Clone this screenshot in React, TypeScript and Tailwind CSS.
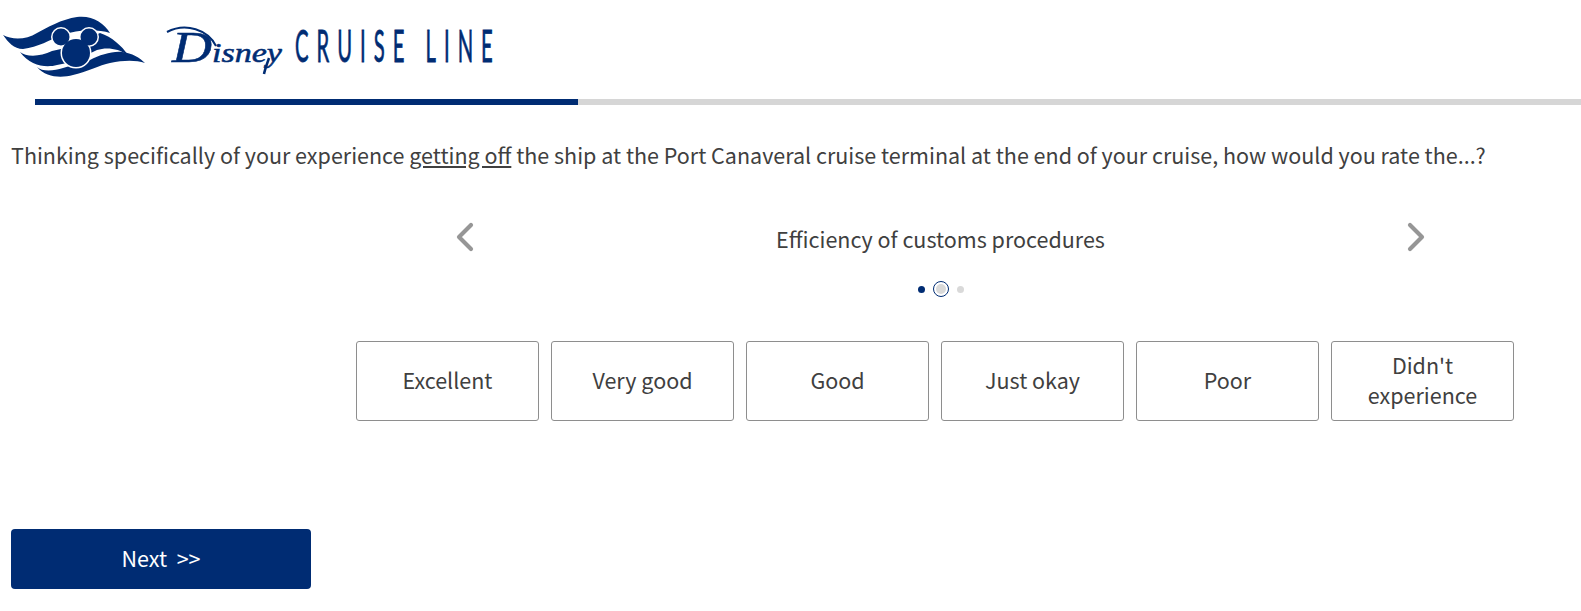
import React from "react";
import { ChevronLeft, ChevronRight } from "lucide-react";

const OPTIONS = ["Excellent", "Very good", "Good", "Just okay", "Poor", "Didn't experience"];

function Logo() {
  return (
    <svg width="510" height="90" viewBox="0 0 510 90" className="block">
      {/* flag */}
      <g fill="#002c73">
        <path d="M3 35 C12 40 26 40 37 33 C46 28 62 19 77 17 C92 15 104 23 110 33 C98 29 78 29 62 35 C50 40 38 47 23 49 C14 49 8 42 3 35 Z" />
        <path d="M20 52 C26 57 40 57 52 51 L70 47 L100 33 C112 37 122 46 128 55 C118 48 106 47 97 50 L72 62 L57 65 C46 68 30 66 20 52 Z" />
        <path d="M37 67 C42 72 54 71 63 68 L90 60 C100 55 112 51 122 52 C132 53 140 58 145 63 C136 60 124 60 110 63 C100 65 86 72 73 75 C62 78 46 78 37 67 Z" />
      </g>
      {/* mouse head, white halo under the fill */}
      <g fill="#002c73" stroke="#fff" strokeWidth="3">
        <circle cx="61" cy="37" r="8.5" />
        <circle cx="89" cy="37" r="8.5" />
        <circle cx="76" cy="53" r="14" />
      </g>
      <g fill="#002c73">
        <circle cx="61" cy="37" r="8.5" />
        <circle cx="89" cy="37" r="8.5" />
        <circle cx="76" cy="53" r="14" />
      </g>
      {/* wordmark */}
      <path d="M167 32 C186 22 208 30 216 46" fill="none" stroke="#002c73" strokeWidth="2" />
      <path d="M269 58 C267 64 265 69 264 74" fill="none" stroke="#002c73" strokeWidth="2.5" />
      <text x="172" y="62" textLength="110" lengthAdjust="spacingAndGlyphs" fill="#002c73" stroke="#002c73" strokeWidth="0.5" fontFamily="'Liberation Serif', serif" fontStyle="italic">
        <tspan fontSize="44">D</tspan>
        <tspan fontSize="27">isney</tspan>
      </text>
      <g transform="translate(295 62) scale(0.46 1)">
        <text x="0" y="0" textLength="430" lengthAdjust="spacing" fill="#002c73" stroke="#002c73" strokeWidth="0.8" fontFamily="Lato, 'Liberation Sans', sans-serif" fontSize="44">
          CRUISE LINE
        </text>
      </g>
    </svg>
  );
}

export default function App() {
  return (
    <div className="w-[1581px] h-[611px] overflow-hidden bg-white text-[#404040] font-['Noto_Sans_CJK_SC',sans-serif] text-[21.5px] leading-[30px]">
      <header className="h-[99px]">
        <Logo />
      </header>

      {/* progress */}
      <div className="ml-[35px] h-[6px] bg-[#d6d6d6]">
        <div className="h-full w-[543px] bg-[#002c73]" />
      </div>

      <p className="ml-[11px] mt-[35px] whitespace-nowrap">
        Thinking specifically of your experience <u>getting off</u> the ship at the Port Canaveral cruise terminal at the end of your cruise, how would you rate the...?
      </p>

      {/* carousel header */}
      <div className="ml-[441px] mt-[54px] w-[999px] flex items-center justify-between h-[30px]">
        <ChevronLeft className="w-12 h-12 mb-[4px] text-[#969696]" strokeWidth={2.1} />
        <span>Efficiency of customs procedures</span>
        <ChevronRight className="w-12 h-12 mb-[4px] text-[#969696]" strokeWidth={2.1} />
      </div>

      <div className="ml-[918px] mt-[26px] w-[46px] flex items-center justify-between h-[18px]">
        <span className="w-[7px] h-[7px] rounded-full bg-[#002c73]" />
        <span className="w-[16px] h-[16px] rounded-full border border-[#002c73] flex items-center justify-center">
          <span className="w-[10px] h-[10px] rounded-full bg-[#d9d9d9]" />
        </span>
        <span className="w-[7px] h-[7px] rounded-full bg-[#d9d9d9]" />
      </div>

      {/* rating options */}
      <div className="ml-[356px] mt-[43px] flex gap-[12px]">
        {OPTIONS.map((label) => (
          <button
            key={label}
            className="w-[183px] h-[80px] px-6 pb-[2px] border border-[#8e8e8e] rounded-[3px] bg-white text-center"
          >
            {label}
          </button>
        ))}
      </div>

      <button className="block ml-[11px] mt-[108px] w-[300px] h-[60px] pb-[2px] rounded-[4px] bg-[#002c73] text-white">
        Next&nbsp; &gt;&gt;
      </button>
    </div>
  );
}
